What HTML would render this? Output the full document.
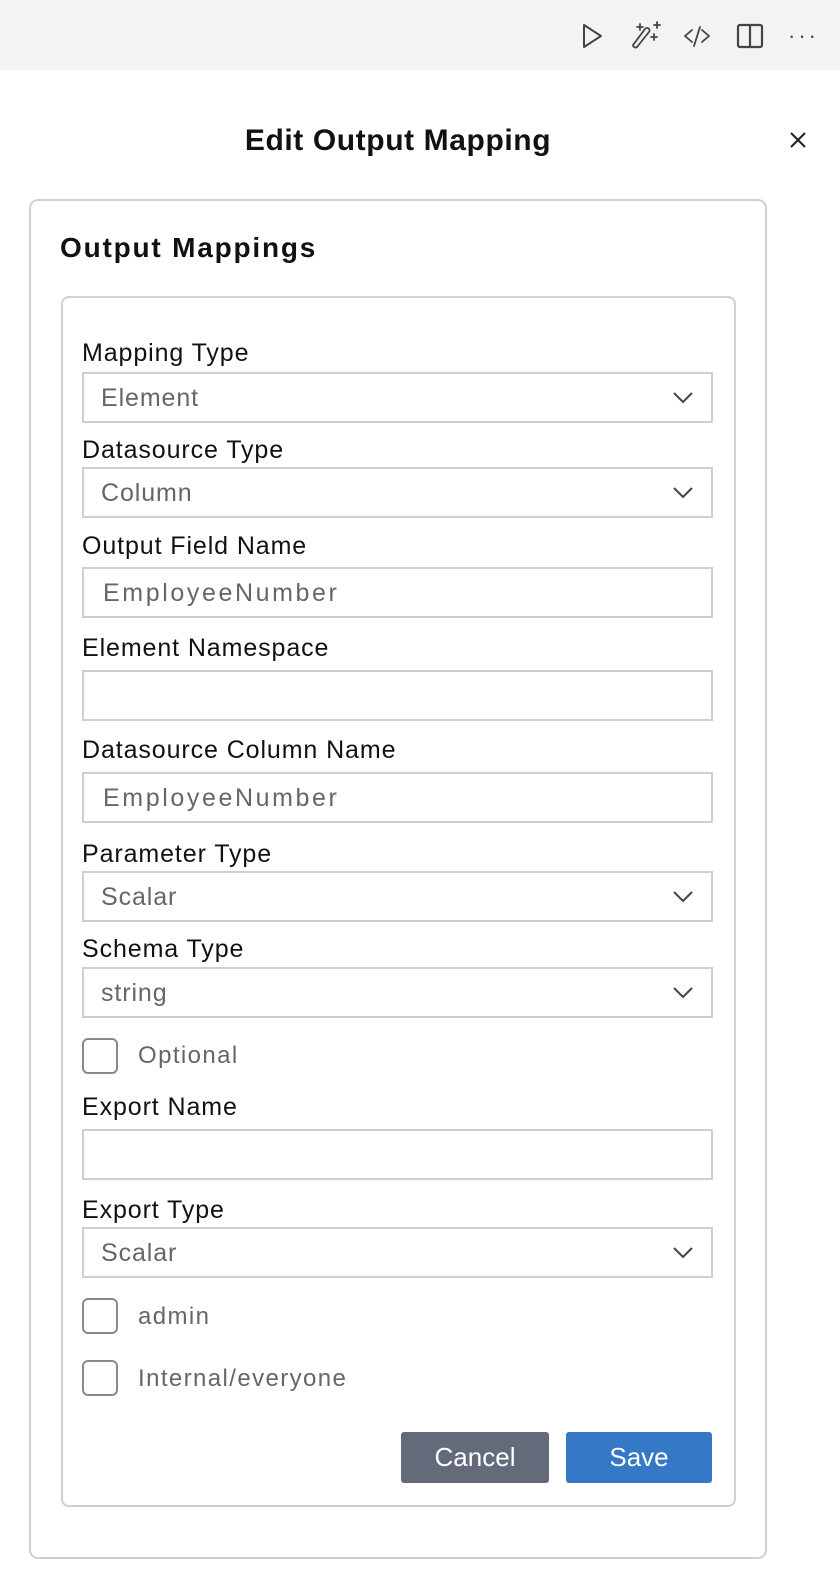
<!DOCTYPE html>
<html><head><meta charset="utf-8"><style>
body{margin:0;width:840px;height:1572px;background:#fff;font-family:"Liberation Sans",Arial,sans-serif;position:relative;overflow:hidden}
.a{position:absolute}
.top{left:0;top:0;width:840px;height:70px;background:#f3f3f3}
.lbl{position:absolute;left:82px;font-size:25px;letter-spacing:0.9px;color:#111;line-height:26px;white-space:nowrap}
.box{position:absolute;left:82px;width:627px;height:47px;border:2px solid #cfcfcf;background:#fff}
.box span{position:absolute;left:17px;top:11px;font-size:25px;letter-spacing:0.9px;color:#666;line-height:26px;white-space:nowrap}
.box span.e{left:19px;letter-spacing:2.6px}
.box svg{position:absolute;right:18px;top:18px}
.cb{position:absolute;left:82px;width:32px;height:32px;border:2px solid #8a8a8a;border-radius:6px}
.cbl{position:absolute;left:138px;font-size:24px;letter-spacing:1.4px;color:#666;line-height:26px;white-space:nowrap}
.btn{position:absolute;top:1432px;height:51px;border-radius:3px;color:#fff;font-size:26px;text-align:center;line-height:51px}
</style></head><body>
<div class="a top"></div>
<svg class="a" style="left:575px;top:20px" width="230" height="32" viewBox="575 20 230 32" fill="none" stroke="#444" stroke-width="2" stroke-linejoin="round" stroke-linecap="round">
<path d="M584 25 L601 36 L584 47 Z"/>
<path d="M633 45 L645 29 A2.5 2.5 0 0 1 649 32 L637 47 A2.5 2.5 0 0 1 633 45 Z" stroke-width="1.8"/>
<path d="M640 24v6M637 27h6M657 22v6M654 25h6M654 34v6M651 37h6" stroke-width="1.8"/>
<path d="M692 30l-7 6 7 6M702 30l7 6-7 6M700 27l-6 19" stroke-width="1.8"/>
<rect x="738" y="25" width="24" height="22" rx="2" stroke-width="2.2"/><path d="M750 25v22" stroke-width="2.2"/>
</svg>
<div class="a" style="left:788px;top:26px;font-size:22px;color:#444;letter-spacing:3px;line-height:20px">···</div>
<div class="a" style="left:0;width:796px;top:125px;text-align:center;font-size:30px;letter-spacing:0.6px;font-weight:bold;color:#111;line-height:32px">Edit Output Mapping</div>
<svg class="a" style="left:789px;top:131px" width="18" height="18" stroke="#222" stroke-width="2"><path d="M2 2L16 16M16 2L2 16"/></svg>
<div class="a" style="left:29px;top:199px;width:734px;height:1356px;border:2px solid #d0d0d0;border-radius:9px"></div>
<div class="a" style="left:60px;top:232px;font-size:28px;letter-spacing:1.8px;font-weight:bold;color:#111;line-height:32px">Output Mappings</div>
<div class="a" style="left:61px;top:296px;width:671px;height:1207px;border:2px solid #d0d0d0;border-radius:8px"></div>

<div class="lbl" style="top:340px">Mapping Type</div>
<div class="box" style="top:372px"><span>Element</span><svg width="20" height="12" fill="none" stroke="#444" stroke-width="2"><path d="M1 1l9 9 9-9"/></svg></div>
<div class="lbl" style="top:437px">Datasource Type</div>
<div class="box" style="top:467px"><span>Column</span><svg width="20" height="12" fill="none" stroke="#444" stroke-width="2"><path d="M1 1l9 9 9-9"/></svg></div>
<div class="lbl" style="top:533px">Output Field Name</div>
<div class="box" style="top:567px"><span class="e">EmployeeNumber</span></div>
<div class="lbl" style="top:635px">Element Namespace</div>
<div class="box" style="top:670px"></div>
<div class="lbl" style="top:737px">Datasource Column Name</div>
<div class="box" style="top:772px"><span class="e">EmployeeNumber</span></div>
<div class="lbl" style="top:841px">Parameter Type</div>
<div class="box" style="top:871px"><span>Scalar</span><svg width="20" height="12" fill="none" stroke="#444" stroke-width="2"><path d="M1 1l9 9 9-9"/></svg></div>
<div class="lbl" style="top:936px">Schema Type</div>
<div class="box" style="top:967px"><span>string</span><svg width="20" height="12" fill="none" stroke="#444" stroke-width="2"><path d="M1 1l9 9 9-9"/></svg></div>
<div class="cb" style="top:1038px"></div><div class="cbl" style="top:1043px">Optional</div>
<div class="lbl" style="top:1094px">Export Name</div>
<div class="box" style="top:1129px"></div>
<div class="lbl" style="top:1197px">Export Type</div>
<div class="box" style="top:1227px"><span>Scalar</span><svg width="20" height="12" fill="none" stroke="#444" stroke-width="2"><path d="M1 1l9 9 9-9"/></svg></div>
<div class="cb" style="top:1298px"></div><div class="cbl" style="top:1304px">admin</div>
<div class="cb" style="top:1360px"></div><div class="cbl" style="top:1366px">Internal/everyone</div>
<div class="btn" style="left:401px;width:148px;background:#636b7a">Cancel</div>
<div class="btn" style="left:566px;width:146px;background:#3578c6">Save</div>
</body></html>
